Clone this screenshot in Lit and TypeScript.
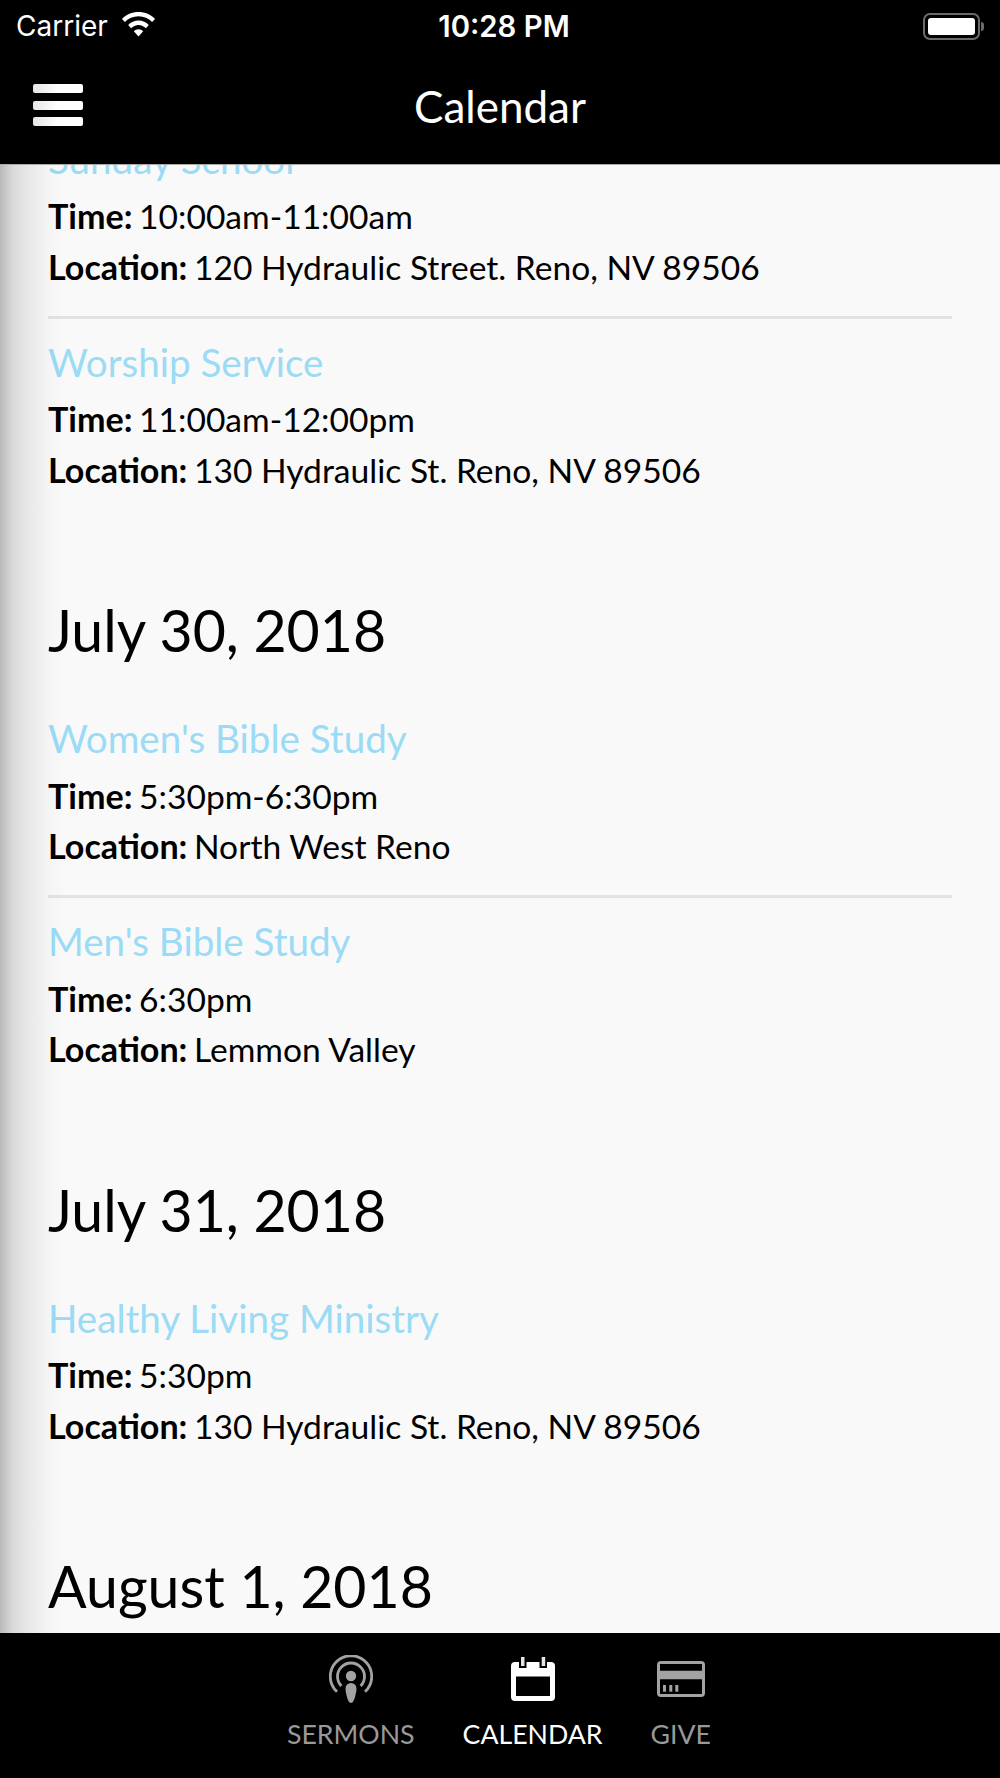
import { LitElement, html, css, svg } from "lit";
import { customElement } from "lit/decorators.js";

interface CalendarEvent {
  title: string;
  time: string;
  location: string;
}

interface CalendarDay {
  date?: string;
  events: CalendarEvent[];
}

const DAYS: CalendarDay[] = [
  {
    events: [
      {
        title: "Sunday School",
        time: "10:00am-11:00am",
        location: "120 Hydraulic Street. Reno, NV 89506",
      },
      {
        title: "Worship Service",
        time: "11:00am-12:00pm",
        location: "130 Hydraulic St. Reno, NV 89506",
      },
    ],
  },
  {
    date: "July 30, 2018",
    events: [
      { title: "Women's Bible Study", time: "5:30pm-6:30pm", location: "North West Reno" },
      { title: "Men's Bible Study", time: "6:30pm", location: "Lemmon Valley" },
    ],
  },
  {
    date: "July 31, 2018",
    events: [
      {
        title: "Healthy Living Ministry",
        time: "5:30pm",
        location: "130 Hydraulic St. Reno, NV 89506",
      },
    ],
  },
  { date: "August 1, 2018", events: [] },
];

const wifiIcon = svg`<svg class="wifi" width="35" height="24.400" viewBox="0 2 35 22.700" preserveAspectRatio="none" fill="#fff">
  <path d="M17.500 2C11 2 5.200 4.400 1 8.400l2.900 3C7.400 8 12.200 6 17.500 6s10.100 2 13.600 5.400l2.900-3C29.800 4.400 24 2 17.500 2z"/>
  <path d="M17.500 10c-4 0-7.600 1.500-10.300 4.100l2.900 3c2-1.800 4.600-3 7.400-3s5.400 1.200 7.400 3l2.900-3C25.100 11.500 21.500 10 17.500 10z"/>
  <path d="M17.500 18c-1.900 0-3.500.7-4.700 1.800l4.700 4.900 4.700-4.900C21 18.700 19.400 18 17.500 18z"/>
</svg>`;

const sermonsIcon = svg`<svg width="44" height="48" viewBox="0 0 44 48" fill="none" stroke="#a3a3a3" stroke-width="2.800">
  <path d="M8 36.700A20.700 20.700 0 1 1 36 36.700"/>
  <path d="M12.400 31A13.500 13.500 0 1 1 31.600 31"/>
  <circle cx="22" cy="21" r="5.200" fill="#a3a3a3" stroke="none"/>
  <path d="M16.500 33.500a5.500 5.500 0 0 1 11 0c0 2-.5 4.500-1.200 7.500C25.500 44.500 24 48 22 48s-3.500-3.500-4.300-7C17 38 16.500 35.500 16.500 33.500z" fill="#a3a3a3" stroke="none"/>
</svg>`;

const calendarIcon = svg`<svg width="44" height="44" viewBox="0 0 44 44">
  <path fill="#fff" fill-rule="evenodd" d="M4 5H8V11H15.500V5H28.500V11H36V5H40a4 4 0 0 1 4 4V40a4 4 0 0 1-4 4H4a4 4 0 0 1-4-4V9a4 4 0 0 1 4-4zM5 19.500V39H39V19.500z"/>
  <rect x="10" y="0" width="3.500" height="9" fill="#e4e4e4"/>
  <rect x="30.700" y="0" width="3.500" height="9" fill="#e4e4e4"/>
</svg>`;

const cardIcon = svg`<svg width="48" height="36" viewBox="0 0 48 36">
  <path fill="#a3a3a3" fill-rule="evenodd" d="M4 0h40a4 4 0 0 1 4 4v28a4 4 0 0 1-4 4H4a4 4 0 0 1-4-4V4a4 4 0 0 1 4-4zM3 3v6.700h42V3zM3 18.300V33h42V18.300z"/>
  <rect x="6" y="24" width="3" height="6.700" fill="#a3a3a3"/>
  <rect x="12.300" y="24" width="3" height="6.700" fill="#a3a3a3"/>
  <rect x="18.300" y="24" width="3" height="6.700" fill="#a3a3a3"/>
</svg>`;

@customElement("app-root")
export class AppRoot extends LitElement {
  private _renderEvent(ev: CalendarEvent) {
    return html`
      <div class="event">
        <div class="event-title">${ev.title}</div>
        <div class="event-line"><b>Time:</b> ${ev.time}</div>
        <div class="event-line"><b>Location:</b> ${ev.location}</div>
      </div>
    `;
  }

  private _renderDay(day: CalendarDay) {
    return html`
      <section class="day">
        ${day.date ? html`<h2 class="day-date">${day.date}</h2>` : ""}
        ${day.events.map((ev) => this._renderEvent(ev))}
      </section>
    `;
  }

  protected render() {
    return html`
      <div class="phone">
        <header class="top">
          <div class="status">
            <div class="status-left">
              <span class="carrier">Carrier</span>
              ${wifiIcon}
            </div>
            <div class="clock">10:28 PM</div>
            <div class="battery"><div class="battery-body"><div class="battery-fill"></div></div><div class="battery-cap"></div></div>
          </div>
          <nav class="navbar">
            <div class="burger"><i></i><i></i><i></i></div>
            <div class="nav-title">Calendar</div>
          </nav>
        </header>

        <main class="content">
          <div class="list">${DAYS.map((d) => this._renderDay(d))}</div>
          <div class="edge-shadow"></div>
        </main>

        <footer class="tabs">
          <div class="tab">${sermonsIcon}<span>SERMONS</span></div>
          <div class="tab active">${calendarIcon}<span>CALENDAR</span></div>
          <div class="tab">${cardIcon}<span>GIVE</span></div>
        </footer>
      </div>
    `;
  }

  static styles = css`
    :host {
      display: block;
      font-family: Lato, "Liberation Sans", sans-serif;
    }
    .phone {
      width: 1000px;
      height: 1778px;
      display: flex;
      flex-direction: column;
      overflow: hidden;
      background: #f9f9f9;
    }
    .top {
      background: #000;
      color: #fff;
      height: 164px;
      flex: none;
      border-bottom: 1px solid #a8a8a8;
      position: relative;
      z-index: 2;
    }
    .status {
      height: 52px;
      display: flex;
      align-items: center;
      justify-content: space-between;
      padding: 0 16px;
      position: relative;
    }
    .status-left {
      display: flex;
      align-items: center;
      gap: 13px;
    }
    .wifi {
      margin-top: -3px;
    }
    .carrier {
      font-family: Inter, Roboto, sans-serif;
      font-size: 28px;
      font-weight: 400;
    }
    .clock {
      position: absolute;
      left: 8px;
      right: 0;
      text-align: center;
      font-family: Inter, Roboto, sans-serif;
      font-size: 29.3px;
      font-weight: 600;
    }
    .battery {
      display: flex;
      align-items: center;
      gap: 1px;
    }
    .battery-body {
      width: 57px;
      height: 27px;
      box-sizing: border-box;
      border: 2px solid #6b6b6b;
      border-radius: 7px;
      padding: 3px;
    }
    .battery-fill {
      height: 100%;
      background: #fff;
      border-radius: 3px;
    }
    .battery-cap {
      width: 3px;
      height: 9px;
      background: #6b6b6b;
      border-radius: 0 3px 3px 0;
    }
    .navbar {
      height: 112px;
      display: flex;
      align-items: center;
      justify-content: center;
      position: relative;
      box-sizing: border-box;
      padding-bottom: 4px;
    }
    .burger {
      position: absolute;
      left: 33px;
      top: 32px;
      width: 50px;
      display: flex;
      flex-direction: column;
      gap: 7.5px;
    }
    .burger i {
      display: block;
      height: 9px;
      border-radius: 2px;
      background: linear-gradient(90deg, #e6e6e6, #fff 50%);
    }
    .nav-title {
      font-size: 44px;
      font-weight: 400;
    }
    .content {
      flex: 1;
      min-height: 0;
      position: relative;
      overflow: hidden;
    }
    .list {
      margin-top: -33.5px;
      padding: 0 48px;
    }
    .day {
      margin-bottom: 99.7px;
    }
    .day-date {
      margin: 0 0 46px;
      font-size: 57.2px;
      line-height: 70px;
      font-weight: 400;
      color: #000;
    }
    .event {
      padding-bottom: 23.5px;
      margin-bottom: 16px;
      border-bottom: 3px solid #e3e3e3;
    }
    .event:last-child {
      border-bottom: none;
      padding-bottom: 0;
      margin-bottom: 0;
    }
    .event-title {
      font-size: 38.6px;
      line-height: 54px;
      color: #9bdbf5;
      margin-bottom: 5.7px;
    }
    .event-line {
      font-size: 33.6px;
      line-height: 50.5px;
      color: #000;
    }
    .event-line b {
      font-size: 34.1px;
      font-weight: 700;
      margin-right: -2px;
    }
    .edge-shadow {
      position: absolute;
      left: 0;
      top: 0;
      bottom: 0;
      width: 68px;
      background: linear-gradient(
        90deg,
        rgba(0, 0, 0, 0.26),
        rgba(0, 0, 0, 0.13) 18%,
        rgba(0, 0, 0, 0.07) 40%,
        rgba(0, 0, 0, 0.015) 74%,
        rgba(0, 0, 0, 0)
      );
      pointer-events: none;
    }
    .tabs {
      height: 145px;
      flex: none;
      background: #000;
      display: flex;
      justify-content: center;
      gap: 48px;
      box-sizing: border-box;
      padding: 22px 2px 0 0;
      position: relative;
      z-index: 2;
    }
    .tab {
      display: flex;
      flex-direction: column;
      align-items: center;
      color: #999;
      font-size: 26.7px;
      line-height: 32px;
    }
    .tab svg {
      height: 48px;
      margin-bottom: 15px;
    }
    .tab.active {
      color: #fff;
    }
  `;
}
